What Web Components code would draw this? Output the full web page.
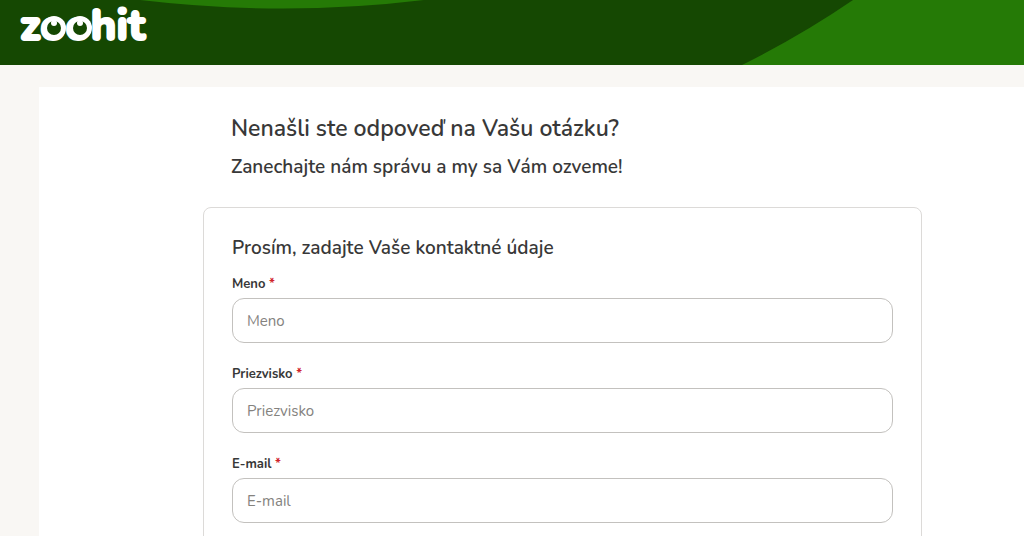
<!DOCTYPE html>
<html lang="sk">
<head>
<meta charset="utf-8">
<meta name="viewport" content="width=device-width, initial-scale=1">
<title>zoohit - kontakt</title>
<style>
body {
    margin: 0;
    background: #f9f7f4;
    color: #383838;
    font-family: Nunito, Lato, sans-serif;
}
</style>
</head>
<body>

<template id="header-template">
<style>
:host {
    display: block;
    position: relative;
    height: 65px;
    background: #154802;
}
.shapes {
    position: absolute;
    inset: 0;
    width: 100%;
    height: 100%;
}
a {
    position: relative;
    display: block;
    width: 160px;
    height: 56px;
}
a svg {
    display: block;
    overflow: visible;
}
</style>
<svg class="shapes" viewBox="0 0 1024 65" preserveAspectRatio="none" fill="#257a06" aria-hidden="true">
    <path d="M140 0 Q284 17 424 0Z"/>
    <path d="M853 0 Q802 35 742 65 H1024 V0Z"/>
</svg>
<a href="#" aria-label="zoohit">
    <svg width="160" height="56" viewBox="0 0 160 56">
        <text x="20" y="40" font-family="Nunito, Lato, sans-serif" font-weight="800" font-size="43" fill="#fff" stroke="#fff" stroke-width="2" stroke-linejoin="round">zoohit</text>
        <!-- pupils and glints in the eyes -->
        <g fill="#fff">
            <circle cx="54" cy="28" r="12"/>
            <circle cx="80" cy="28" r="12"/>
        </g>
        <g fill="#154802">
            <circle cx="54" cy="28" r="7"/>
            <circle cx="80" cy="28" r="7"/>
        </g>
        <g fill="#fff">
            <circle cx="54" cy="23" r="3"/>
            <circle cx="80" cy="23" r="3"/>
        </g>
    </svg>
</a>
</template>

<template id="panel-template">
<style>
:host {
    display: block;
    margin: 22px 0 0 39px;
    padding: 28px 102px 0 164px;
    background: #fff;
}
header {
    padding: 0 28px;
}
h1, h2 {
    margin: 0;
    font-weight: 650;
}
h1 {
    font-size: 23px;
    line-height: 28px;
}
h2 {
    margin-top: 12px;
    font-size: 19px;
    line-height: 24px;
}
</style>
<header>
    <h1><slot name="title"></slot></h1>
    <h2><slot name="subtitle"></slot></h2>
</header>
<slot></slot>
</template>

<template id="card-template">
<style>
:host {
    display: block;
    margin-top: 28px;
    padding: 28px;
    border: 1px solid #dcdad8;
    border-radius: 8px;
}
h2 {
    margin: 0 0 14px;
    font-size: 19px;
    line-height: 24px;
    font-weight: 650;
}
form {
    display: flex;
    flex-direction: column;
    gap: 21px;
}
</style>
<h2><slot name="title"></slot></h2>
<form><slot></slot></form>
</template>

<template id="field-template">
<style>
:host {
    display: flex;
    flex-direction: column;
    gap: 4px;
}
label {
    font-size: 13px;
    line-height: 20px;
    font-weight: 700;
}
.required {
    color: #d0242b;
}
input {
    box-sizing: border-box;
    width: 100%;
    height: 45px;
    padding: 0 14px;
    border: 1px solid #c3c1be;
    border-radius: 12px;
    background: #fff;
    color: inherit;
    font-family: inherit;
    font-size: 15px;
}
input::placeholder {
    color: #84827e;
    opacity: 1;
}
</style>
<label for="field"><span class="name"></span> <span class="required">*</span></label>
<input id="field" required>
</template>

<zoo-header></zoo-header>
<zoo-panel>
    <span slot="title">Nenašli ste odpoveď na Vašu otázku?</span>
    <span slot="subtitle">Zanechajte nám správu a my sa Vám ozveme!</span>
    <zoo-card>
        <span slot="title">Prosím, zadajte Vaše kontaktné údaje</span>
        <zoo-field label="Meno"></zoo-field>
        <zoo-field label="Priezvisko"></zoo-field>
        <zoo-field label="E-mail" type="email"></zoo-field>
    </zoo-card>
</zoo-panel>

<script>
//attaches a copy of the template with the given id
function attachTemplate(element, id) {
    const root = element.attachShadow({ mode: "open" });
    root.appendChild(document.getElementById(id).content.cloneNode(true));
    return root;
}

class ZooHeader extends HTMLElement {
    constructor() {
        super();
        attachTemplate(this, "header-template");
    }
}

class ZooPanel extends HTMLElement {
    constructor() {
        super();
        attachTemplate(this, "panel-template");
    }
}

class ZooCard extends HTMLElement {
    constructor() {
        super();
        attachTemplate(this, "card-template");
    }
}

class ZooField extends HTMLElement {
    constructor() {
        super();
        attachTemplate(this, "field-template");
    }

    connectedCallback() {
        const label = this.getAttribute("label");
        const input = this.shadowRoot.querySelector("input");
        this.shadowRoot.querySelector(".name").textContent = label;
        input.placeholder = label;
        input.type = this.getAttribute("type") || "text";
    }
}

customElements.define("zoo-header", ZooHeader);
customElements.define("zoo-panel", ZooPanel);
customElements.define("zoo-card", ZooCard);
customElements.define("zoo-field", ZooField);
</script>
</body>
</html>
